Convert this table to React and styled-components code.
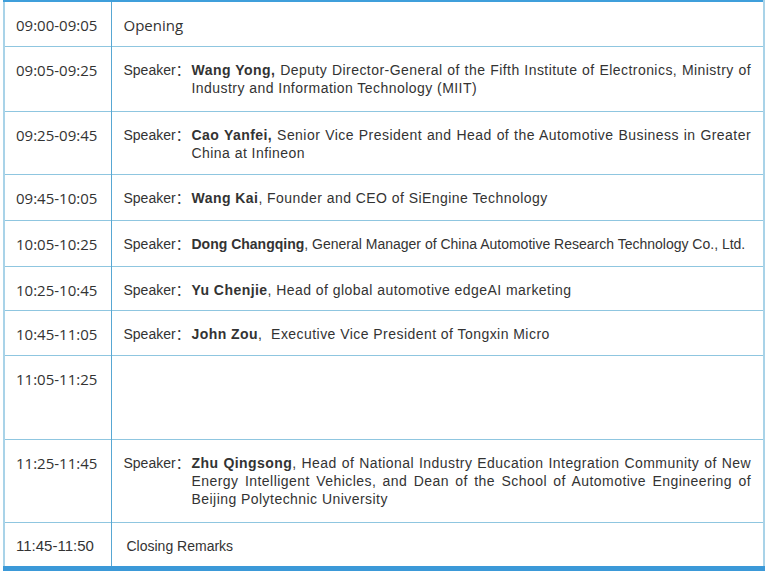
import styled, { createGlobalStyle } from 'styled-components';

const GlobalStyle = createGlobalStyle`
  html, body {
    margin: 0;
    padding: 0;
    background: #fff;
  }
`;

const rows = [
  { time: '09:00-09:05', text: 'Opening', height: 45 },
  {
    time: '09:05-09:25',
    name: 'Wang Yong,',
    rest: ' Deputy Director-General of the Fifth Institute of Electronics, Ministry of Industry and Information Technology (MIIT)',
    height: 65,
  },
  {
    time: '09:25-09:45',
    name: 'Cao Yanfei,',
    rest: ' Senior Vice President and Head of the Automotive Business in Greater China at Infineon',
    height: 63,
  },
  { time: '09:45-10:05', name: 'Wang Kai', rest: ', Founder and CEO of SiEngine Technology', height: 46 },
  {
    time: '10:05-10:25',
    name: 'Dong Changqing',
    rest: ', General Manager of China Automotive Research Technology Co., Ltd.',
    height: 46,
    tight: true,
  },
  { time: '10:25-10:45', name: 'Yu Chenjie', rest: ', Head of global automotive edgeAI marketing', height: 44 },
  { time: '10:45-11:05', name: 'John Zou', rest: ',\u00a0 Executive Vice President of Tongxin Micro', height: 45 },
  { time: '11:05-11:25', height: 84 },
  {
    time: '11:25-11:45',
    name: 'Zhu Qingsong',
    rest: ', Head of National Industry Education Integration Community of New Energy Intelligent Vehicles, and Dean of the School of Automotive Engineering of Beijing Polytechnic University',
    height: 83,
  },
  { time: '11:45-11:50', text: 'Closing Remarks', height: 46, indent: true, font: 'arial' },
];

export default function App() {
  return (
    <>
      <GlobalStyle />
      <Agenda>
        <colgroup>
          <TimeCol />
          <col />
        </colgroup>
        <tbody>
          {rows.map((row) => (
            <Row key={row.time} height={row.height}>
              <TimeCell font={row.font}>{row.time}</TimeCell>
              <ContentCell>
                {row.text && (
                  <PlainText indent={row.indent} font={row.font}>
                    {row.text}
                  </PlainText>
                )}
                {row.name && (
                  <SpeakerLine>
                    <Label>Speaker：</Label>
                    <Body tight={row.tight}>
                      <Name>{row.name}</Name>
                      {row.rest}
                    </Body>
                  </SpeakerLine>
                )}
              </ContentCell>
            </Row>
          ))}
        </tbody>
      </Agenda>
    </>
  );
}

const fontFor = (font) =>
  font === 'arial' ? '"Liberation Sans", Arial, sans-serif' : '"Open Sans", "Noto Sans", sans-serif';

const Agenda = styled.table`
  margin-left: 3px;
  width: 762px;
  border-collapse: collapse;
  table-layout: fixed;
  border-top: 2px solid #3f9fdb;
  border-bottom: 5px solid #3b99d8;
  border-left: 2px solid #a9d3e8;
  border-right: 2px solid #a9d3e8;
`;

const TimeCol = styled.col`
  width: 107px;
`;

const Row = styled.tr`
  height: ${({ height }) => height}px;

  & + & {
    border-top: 1px solid #8fc6e0;
  }
`;

const TimeCell = styled.td`
  padding: 14px 0 0 11px;
  vertical-align: top;
  border-right: 1px solid #58a7d3;
  font-family: ${({ font }) => fontFor(font)};
  font-size: 15px;
  line-height: 18px;
  color: #333;
  white-space: nowrap;
`;

const ContentCell = styled.td`
  padding: 14px 12px 0 12px;
  vertical-align: top;
  font-family: "Liberation Sans", Arial, "Noto Sans CJK SC", sans-serif;
  font-size: 14px;
  line-height: 18px;
  color: #333;
`;

const PlainText = styled.div`
  padding-left: ${({ indent }) => (indent ? '3px' : '0')};
  font-family: ${({ font }) => fontFor(font)};
  font-size: ${({ font }) => (font === 'arial' ? '14px' : '15px')};
`;

const SpeakerLine = styled.div`
  display: flex;
  align-items: flex-start;
`;

const Label = styled.span`
  flex: none;
  width: 68px;
  white-space: nowrap;
`;

const Body = styled.div`
  flex: 1;
  text-align: justify;
  letter-spacing: ${({ tight }) => (tight ? '0' : '0.45px')};
  white-space: ${({ tight }) => (tight ? 'nowrap' : 'normal')};
`;

const Name = styled.b`
  font-weight: bold;
`;
